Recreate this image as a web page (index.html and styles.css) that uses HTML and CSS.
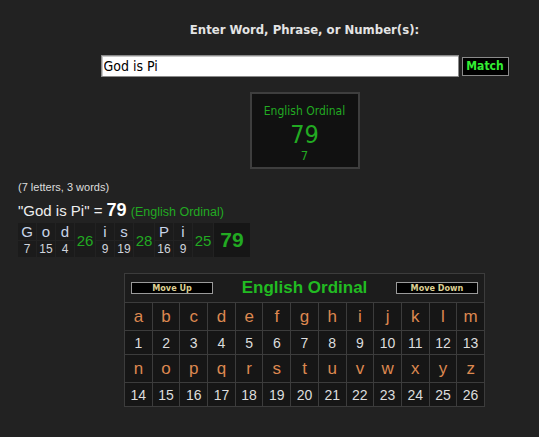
FILE: index.html
```html
<!DOCTYPE html>
<html>
<head>
<meta charset="utf-8">
<link rel="stylesheet" href="styles.css">
</head>
<body>
<div class="page">
  <div class="center-col">
    <div class="prompt">Enter Word, Phrase, or Number(s):</div>
    <div class="entry">
      <input class="entry-input" type="text" value="God is Pi">
      <button class="match-btn">Match</button>
    </div>
    <div class="result-box">
      <div class="rb-name">English Ordinal</div>
      <div class="rb-value">79</div>
      <div class="rb-red">7</div>
    </div>
  </div>
  <div class="summary">
    <div class="counts">(7 letters, 3 words)</div>
    <div class="equation">"God is Pi" = <b class="eq-val">79</b> <span class="eq-name">(English Ordinal)</span></div>
    <table class="breakdown">
      <tr>
        <td class="bl">G</td><td class="bl">o</td><td class="bl">d</td><td class="bs" rowspan="2">26</td>
        <td class="bl">i</td><td class="bl">s</td><td class="bs" rowspan="2">28</td>
        <td class="bl">P</td><td class="bl">i</td><td class="bs" rowspan="2">25</td>
        <td class="bt" rowspan="2">79</td>
      </tr>
      <tr>
        <td class="bn">7</td><td class="bn">15</td><td class="bn">4</td>
        <td class="bn">9</td><td class="bn">19</td>
        <td class="bn">16</td><td class="bn">9</td>
      </tr>
    </table>
  </div>
  <div class="center-col">
    <table class="cipher">
      <tr class="cipher-head">
        <td colspan="13">
          <div class="head-row">
            <button class="move-btn">Move Up</button>
            <span class="cipher-title">English Ordinal</span>
            <button class="move-btn">Move Down</button>
          </div>
        </td>
      </tr>
      <tr class="lt"><td>a</td><td>b</td><td>c</td><td>d</td><td>e</td><td>f</td><td>g</td><td>h</td><td>i</td><td>j</td><td>k</td><td>l</td><td>m</td></tr>
      <tr class="nm"><td>1</td><td>2</td><td>3</td><td>4</td><td>5</td><td>6</td><td>7</td><td>8</td><td>9</td><td>10</td><td>11</td><td>12</td><td>13</td></tr>
      <tr class="lt"><td>n</td><td>o</td><td>p</td><td>q</td><td>r</td><td>s</td><td>t</td><td>u</td><td>v</td><td>w</td><td>x</td><td>y</td><td>z</td></tr>
      <tr class="nm"><td>14</td><td>15</td><td>16</td><td>17</td><td>18</td><td>19</td><td>20</td><td>21</td><td>22</td><td>23</td><td>24</td><td>25</td><td>26</td></tr>
    </table>
  </div>
</div>
</body>
</html>
```

FILE: styles.css
```css
html, body {
  margin: 0;
  padding: 0;
  background: #222222;
  height: 100%;
}
.page {
  width: 539px;
  font-family: "Liberation Sans", Arial, sans-serif;
  color: #dddddd;
}
.center-col {
  margin-left: 70px;
  width: 469px;
  display: flex;
  flex-direction: column;
  align-items: center;
}
.prompt {
  margin-top: 22px;
  font-family: "DejaVu Sans Condensed", "DejaVu Sans", sans-serif;
  font-weight: bold;
  font-size: 13px;
  line-height: 16px;
  color: #e4e4e4;
}
.entry {
  margin-top: 17px;
  display: flex;
  align-items: center;
  gap: 3px;
}
.entry-input {
  box-sizing: border-box;
  width: 358px;
  height: 22px;
  margin: 0;
  padding: 0 2px;
  border: 1px solid #8a8a8a;
  box-shadow: inset 1px 1px 0 #c8c8c8;
  background: #ffffff;
  color: #000;
  font-family: "DejaVu Sans Condensed", "DejaVu Sans", sans-serif;
  font-size: 14px;
}
.match-btn {
  box-sizing: border-box;
  width: 47px;
  height: 19px;
  margin: 0;
  padding: 0;
  background: #000;
  border: 1px solid #8a8a8a;
  color: #33ee33;
  font-family: "DejaVu Sans Condensed", "DejaVu Sans", sans-serif;
  font-weight: bold;
  font-size: 12px;
}
.result-box {
  margin-top: 15px;
  box-sizing: border-box;
  width: 110px;
  height: 77px;
  border: 2px solid #3e3e3e;
  background: #111111;
  color: #22aa22;
  text-align: center;
  font-family: "DejaVu Sans Condensed", "DejaVu Sans", sans-serif;
}
.rb-name {
  margin-top: 10px;
  font-size: 12px;
  line-height: 14px;
}
.rb-value {
  font-size: 25px;
  line-height: 28px;
  margin-top: 3px;
}
.rb-red {
  font-size: 13px;
  line-height: 14px;
}
.summary {
  padding-left: 18px;
  margin-top: 11px;
}
.counts {
  font-size: 11px;
  line-height: 14px;
  color: #dddddd;
}
.equation {
  margin-top: 7px;
  font-size: 15px;
  line-height: 18px;
  color: #eeeeee;
}
.eq-val {
  font-size: 18px;
  color: #ffffff;
}
.eq-name {
  font-size: 12.5px;
  color: #22aa22;
}
.breakdown {
  margin-top: 1px;
  border-collapse: separate;
  border-spacing: 1px;
  margin-left: -1px;
}
.breakdown td {
  padding: 0;
  text-align: center;
  background: #1b1b1b;
}
.bl {
  width: 18px;
  height: 17px;
  font-size: 15px;
  line-height: 17px;
  color: #c8d4e8;
}
.bn {
  width: 18px;
  height: 16px;
  font-size: 12px;
  line-height: 16px;
  color: #d0d4dc;
}
.bs {
  width: 20px;
  font-size: 15px;
  color: #22aa22;
}
.bt {
  width: 36px;
  font-size: 21px;
  font-weight: bold;
  color: #22aa22;
  background: #161616 !important;
}
.cipher {
  margin-top: 15px;
  border-collapse: collapse;
  border: 1px solid #3c3c3c;
  background: #1c1c1c;
}
.cipher td {
  border: 1px solid #3c3c3c;
  padding: 0;
  text-align: center;
}
.cipher-head td {
  height: 28px;
}
.head-row {
  display: flex;
  align-items: center;
  justify-content: space-between;
  padding: 0 6px;
}
.move-btn {
  box-sizing: border-box;
  width: 82px;
  height: 12px;
  margin: 0;
  padding: 0;
  background: #000;
  border: 1px solid #9a9a9a;
  color: #dccf92;
  font-family: "DejaVu Sans Condensed", "DejaVu Sans", sans-serif;
  font-weight: bold;
  font-size: 9px;
  line-height: 10px;
}
.cipher-title {
  color: #22bb22;
  font-weight: bold;
  font-size: 17px;
  line-height: 20px;
}
.cipher tr.lt td,
.cipher tr.nm td {
  width: 26.7px;
  background: #161616;
}
.lt td {
  height: 27px;
  font-size: 17px;
  color: #dd8850;
}
.nm td {
  height: 23px;
  font-size: 14px;
  color: #dddddd;
}
```
